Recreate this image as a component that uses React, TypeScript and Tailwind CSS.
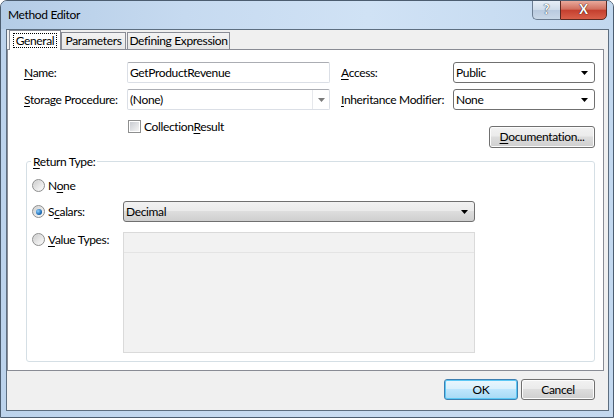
import React from "react";

function U({ children }: { children: React.ReactNode }) {
  return <span className="underline underline-offset-[2px] decoration-[1px]">{children}</span>;
}

function Arrow({ color = "#000" }: { color?: string }) {
  return (
    <svg width="7" height="4" viewBox="0 0 7 4">
      <path d="M0 0h7L3.5 4z" fill={color} />
    </svg>
  );
}

function Radio({ checked }: { checked?: boolean }) {
  return (
    <span className="w-[13px] h-[13px] shrink-0 rounded-full border border-[#8e8f8f] bg-[linear-gradient(135deg,#d4d4d4,#f9f9f9)] flex items-center justify-center">
      <span className="w-[9px] h-[9px] rounded-full bg-[linear-gradient(135deg,#cfcfcf,#fafafa)] flex items-center justify-center">
        {checked && (
          <span className="w-[6px] h-[6px] rounded-full bg-[radial-gradient(circle_at_35%_35%,#8fd0ff,#1f6fb8_60%,#0d3f75)]" />
        )}
      </span>
    </span>
  );
}

function Checkbox() {
  return (
    <span className="w-[13px] h-[13px] shrink-0 border border-[#8e8f8f] bg-white flex items-center justify-center">
      <span className="w-[9px] h-[9px] bg-[linear-gradient(135deg,#c9ccd2,#f4f4f4)]" />
    </span>
  );
}

function Select({ value, w, gray }: { value: string; w: string; gray?: boolean }) {
  return (
    <div
      className={`${w} h-[21px] rounded-[3px] border border-[#707070] flex items-center pl-[2px] pr-[6px] ${
        gray
          ? "bg-[linear-gradient(#f2f2f2,#ebebeb_45%,#dddddd_50%,#cfcfcf)]"
          : "bg-white"
      }`}
    >
      <span className="flex-1">{value}</span>
      <Arrow />
    </div>
  );
}

function Button({ children, w, def }: { children: React.ReactNode; w: string; def?: boolean }) {
  return (
    <div
      className={`${w} rounded-[3px] border flex items-center justify-center ${
        def
          ? "border-[#3c7fb1] bg-[linear-gradient(#eaf6fd,#d9f0fc_45%,#bee6fd_50%,#a7d9f5)] shadow-[inset_0_0_0_1px_#5cc8f5]"
          : "border-[#707070] bg-[linear-gradient(#f2f2f2,#ebebeb_45%,#dddddd_50%,#cfcfcf)] shadow-[inset_0_0_0_1px_#fcfcfc]"
      }`}
    >
      {children}
    </div>
  );
}

export default function App() {
  return (
    <div className="w-[614px] h-[418px] relative flex flex-col rounded-t-[7px] border border-[#4c5d70] bg-[linear-gradient(90deg,#bcd3ec,#c9dcf1_50%,#c3d8ef)] text-[12px] tracking-[-0.35px] text-black font-[Lato,sans-serif] overflow-hidden">
      {/* Title bar */}
      <div className="h-[28px] shrink-0 flex items-center pl-[7px] bg-[linear-gradient(90deg,#b4cce6,#c6daf0_30%,#d0e2f5_60%,#c2d8ef)]">
        <span className="text-[12px]">Method Editor</span>
      </div>
      <div className="absolute top-[-1px] right-[6px] flex h-[20px] tracking-normal">
        <div className="w-[28px] h-full rounded-bl-[5px] border border-[#6b7d92] border-r-0 bg-[linear-gradient(#e6eef7,#cfdcea_48%,#b9cadf_52%,#c9d8e8)] flex items-center justify-center font-bold text-white text-[13px] [text-shadow:0_0_1px_#2a3646,0_0_1px_#2a3646]">
          ?
        </div>
        <div className="w-[47px] h-full rounded-br-[5px] border border-[#5b2a22] bg-[linear-gradient(#e9a99b,#d1705f_45%,#c4402f_52%,#d9604a)] flex items-center justify-center font-bold text-white text-[13px] [text-shadow:0_0_1px_#3a1410,0_0_1px_#3a1410]">
          X
        </div>
      </div>

      {/* Client area */}
      <div className="ml-[5px] mr-[4px] mb-[6px] h-[382px] border border-[#5d6e80] bg-[#f0f0f0] flex flex-col">
        {/* Tabs */}
        <div className="h-[19px] flex items-end pl-[2px] shrink-0 whitespace-nowrap">
          <div className="relative z-10 -mb-px w-[52px] h-[20px] border border-b-0 border-[#898c95] bg-white flex items-start justify-center pt-[2px]">
            <span className="border border-dotted border-black px-[2px] leading-[13px]">General</span>
          </div>
          <div className="w-[65px] h-[17px] border border-b-0 border-[#898c95] bg-[linear-gradient(#f3f3f3,#e6e6e6)] flex items-center justify-center">
            Parameters
          </div>
          <div className="ml-[1px] w-[103px] h-[17px] border border-b-0 border-[#898c95] bg-[linear-gradient(#f3f3f3,#e6e6e6)] flex items-center justify-center">
            Defining Expression
          </div>
        </div>

        {/* Panel */}
        <div className="w-[597px] h-[322px] border border-[#898c95] bg-white flex flex-col pl-[16px] pr-[8px] pt-[12px]">
          <div className="flex h-[21px] items-center">
            <span className="w-[103px]">
              <U>N</U>ame:
            </span>
            <div className="w-[203px] h-[21px] rounded-[2px] border border-[#dbdfe6] border-t-[#abadb3] flex items-center pl-[2px]">
              GetProductRevenue
            </div>
            <span className="ml-[11px] w-[112px]">
              <U>A</U>ccess:
            </span>
            <Select value="Public" w="w-[142px]" />
          </div>
          <div className="flex h-[21px] items-center mt-[6px]">
            <span className="w-[103px] whitespace-nowrap">
              <U>S</U>torage Procedure:
            </span>
            <div className="w-[203px] h-[21px] rounded-[2px] border border-[#dbdfe6] border-t-[#abadb3] flex items-center">
              <span className="flex-1 pl-[2px]">(None)</span>
              <span className="w-[17px] h-full border-l border-[#e6e8ec] flex items-center justify-center">
                <Arrow color="#7a7a7a" />
              </span>
            </div>
            <span className="ml-[11px] w-[112px] whitespace-nowrap">
              <U>I</U>nheritance Modifier:
            </span>
            <Select value="None" w="w-[142px]" />
          </div>
          <div className="flex mt-[6px]">
            <div className="w-[306px] pl-[104px] pt-[2px] flex items-center h-[15px] mt-[2px] gap-[3px]">
              <Checkbox />
              <span>
                Collection<U>R</U>esult
              </span>
            </div>
            <div className="ml-auto mt-[10px]">
              <Button w="w-[106px] h-[22px]">
                <span>
                  <U>D</U>ocumentation...
                </span>
              </Button>
            </div>
          </div>

          {/* Group box */}
          <div className="relative ml-[2px] mt-[13px] h-[201px] rounded-[3px] border border-[#d5dfe5] pl-[5px] pt-[13px] pb-[8px] flex flex-col">
            <span className="absolute left-[4px] top-[-8px] bg-white px-[2px] leading-[15px]">
              <U>R</U>eturn Type:
            </span>
            <div className="flex h-[21px] items-center">
              <div className="w-[91px] flex items-center gap-[3px]">
                <Radio />
                <span>
                  N<U>o</U>ne
                </span>
              </div>
            </div>
            <div className="flex h-[21px] items-center mt-[5px]">
              <div className="w-[91px] flex items-center gap-[3px]">
                <Radio checked />
                <span>
                  S<U>c</U>alars:
                </span>
              </div>
              <Select value="Decimal" w="w-[352px]" gray />
            </div>
            <div className="flex items-start mt-[10px]">
              <div className="w-[91px] flex items-center gap-[3px] h-[15px]">
                <Radio />
                <span>
                  <U>V</U>alue Types:
                </span>
              </div>
              <div className="w-[352px] h-[121px] border border-[#dadada] bg-[#f2f2f2]">
                <div className="h-[20px] border-b border-[#e4e4e4]" />
              </div>
            </div>
          </div>
        </div>

        {/* Footer */}
        <div className="flex justify-end pt-[8px] pr-[13px] gap-[3px]">
          <Button w="w-[74px] h-[21px]" def>
            OK
          </Button>
          <Button w="w-[74px] h-[21px]">Cancel</Button>
        </div>
      </div>
    </div>
  );
}
